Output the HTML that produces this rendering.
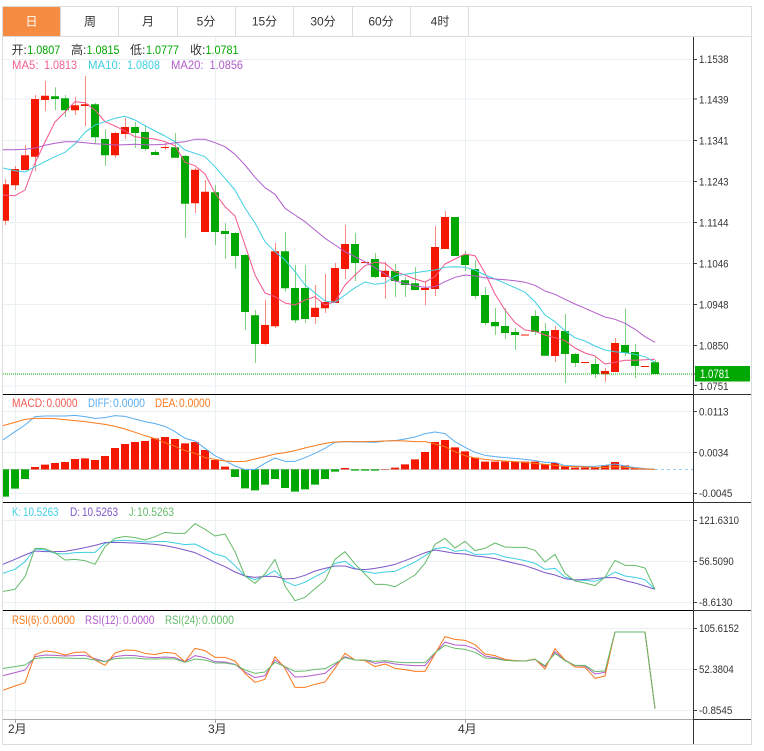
<!DOCTYPE html>
<html lang="zh">
<head>
<meta charset="utf-8">
<title>K线图</title>
<style>
html,body{margin:0;padding:0;background:#fff;width:764px;height:751px;overflow:hidden}
svg{display:block;font-family:"Liberation Sans","Noto Sans CJK SC",sans-serif}
.l{fill:none;stroke-width:1;vector-effect:non-scaling-stroke;stroke-linejoin:round}
.ax{font-size:11px;fill:#333}
.t{font-size:12px;fill:#333;text-anchor:middle;font-family:"Liberation Sans","Noto Sans CJK SC",sans-serif}
.lg{font-size:12px}
</style>
</head>
<body>
<svg width="764" height="751" viewBox="0 0 764 751" xmlns="http://www.w3.org/2000/svg">
<rect width="764" height="751" fill="#fff"/>
<rect x="2.5" y="6.5" width="749" height="738" fill="#fff" stroke="#dcdcdc"/>
<rect x="3" y="7" width="57" height="29" fill="#f58c42"/>
<path d="M3 36.5H751M60.5 7V36M118.5 7V36M177.5 7V36M235.5 7V36M293.5 7V36M352.5 7V36M410.5 7V36M468.5 7V36" stroke="#dcdcdc" fill="none"/>
<text class="t" x="31.5" y="25.5" style="fill:#fff">日</text>
<text class="t" x="90" y="25.5">周</text>
<text class="t" x="148" y="25.5">月</text>
<text class="t" x="206" y="25.5">5分</text>
<text class="t" x="264.5" y="25.5">15分</text>
<text class="t" x="323" y="25.5">30分</text>
<text class="t" x="381" y="25.5">60分</text>
<text class="t" x="440" y="25.5">4时</text>

<!-- grid -->
<path stroke="#e9f0f4" fill="none" d="M3 59.5H693M3 99H693M3 140.5H693M3 181.5H693M3 222.5H693M3 263.5H693M3 304.5H693M3 345.5H693M3 386H693M3 411.5H693M3 452.5H693M3 493.5H693M3 520.5H693M3 561.5H693M3 602.5H693M3 628.5H693M3 669.5H693M3 710.5H693"/>
<path stroke="#eaf1f5" fill="none" d="M15.5 37V719M215.5 37V719M465.5 37V719"/>

<clipPath id="c"><rect x="3" y="37" width="690" height="682"/></clipPath>
<g clip-path="url(#c)">
<!-- candle wicks -->
<g transform="translate(.5,0)" stroke-opacity=".5">
<path fill="none" stroke="#f51800" d="M5 179V225M15 166V190M25 145V170M35 95V171M45 81V111M75 96.700V115M85 76V126M115 131.700V158M125 118V139M165 143V150M195 168V213M205 180V232M265 300V345M275 243V328M315 285V324M325 274V313M335 263V303M345 225V279M385 262V298.700M425 281.700V305.300M435 226V296M445 211V249M555 326V362M605 368V381.700M615 338V372"/>
<path fill="none" stroke="#02a802" d="M55 87.300V110M65 95V117M95 103V144M105 129.300V165.700M135 122V148M145 125V151M155 150V155M175 133V157.700M185 155V238M215 185V245M225 223V258.700M235 232.300V268.700M245 254V330M255 310V363M285 232V291.700M295 265V323M305 265V323M355 233V281M375 253V278M395 264V297M405 277V297M415 267V290M465 251V271M475 260V299M485 287V325M495 308V335M505 308V339M515 328V350M535 310V335M545 323V356M565 314V383M575 353V367M595 357V378M625 308.700V356M635 344V378M655 360V374"/>
</g>
<!-- candle bodies -->
<path fill="#f51800" d="M1 184.300h8V220.700h-8zM11 169h8V185.300h-8zM21 155.300h8V170h-8zM31 99h8V156.700h-8zM41 95.700h8V100h-8zM71 105.300h8V110.300h-8zM81 104.300h8V106h-8zM111 133h8V155.300h-8zM121 127h8V134h-8zM161 147h8V148h-8zM191 169.700h8V203.300h-8zM201 191.700h8V232h-8zM261 325h8V344h-8zM271 251.300h8V326.300h-8zM311 307.700h8V317h-8zM321 302h8V308.300h-8zM331 268h8V303h-8zM341 244h8V269h-8zM361 262h8V263h-8zM381 270.700h8V277h-8zM421 288h8V290h-8zM431 247h8V289h-8zM441 217h8V249h-8zM521 334.500h8V335.500h-8zM551 330h8V356h-8zM581 362h8V363h-8zM601 371h8V374.300h-8zM611 343h8V372h-8zM641 366h8V367h-8z"/>
<path fill="#02a802" d="M51 96.300h8V99h-8zM61 98.300h8V110.300h-8zM91 104.300h8V137.300h-8zM101 139h8V155.300h-8zM131 127h8V133h-8zM141 132h8V149h-8zM151 152h8V155h-8zM171 147.300h8V157.700h-8zM181 156h8V203.700h-8zM211 192.300h8V232h-8zM221 231h8V234h-8zM231 233h8V256h-8zM241 255h8V312h-8zM251 315.300h8V344h-8zM281 251.300h8V288.300h-8zM291 288h8V320.300h-8zM301 288h8V319h-8zM351 244h8V263h-8zM371 259h8V277h-8zM391 271h8V281h-8zM401 280.300h8V285h-8zM411 283.300h8V290h-8zM451 217h8V256h-8zM461 255h8V265h-8zM471 269h8V296h-8zM481 295h8V323h-8zM491 322h8V326.300h-8zM501 326h8V333h-8zM511 332h8V335h-8zM531 316h8V332h-8zM541 331h8V355.700h-8zM561 331h8V354h-8zM571 354h8V363h-8zM591 364h8V374h-8zM621 345h8V353h-8zM631 352h8V366h-8zM651 362.300h8V374h-8z"/>
<!-- MA -->
<polyline class="l" stroke="#f4558e" points="3,195 15,195.700 25,190 35,163 45,142 55,122 65,112 75,101.700 85,102.700 95,110 105,121.700 115,126 125,131 135,136.700 145,138 155,139 165,141.700 175,145.700 185,162.300 195,165.700 205,174 215,193 225,206.700 235,216 245,245 255,275 265,293 275,296.700 285,303 295,305 305,300 315,296.700 325,305 335,301.700 345,285 355,275 365,265.700 375,262.300 385,263.300 395,271.700 405,275 415,279 425,282 435,276.700 445,264 455,259 465,254 475,255.700 485,273 495,294 505,310 515,322.700 525,330 535,331.300 545,335 555,337.700 565,340.700 575,348 585,353 595,356 605,364 615,362.300 625,360.300 635,360.300 645,359.700 655,359.300"/>
<polyline class="l" stroke="#3fcfe2" points="3,168 15,170.700 25,172 35,166.700 45,161.700 55,156.700 65,152.300 75,144 85,132.300 95,125 105,121.700 115,118.300 125,116.300 135,120 145,125.700 155,131 165,136 175,141.700 185,150 195,153.300 205,156.700 215,166.700 225,178.300 235,190 245,208 255,223 265,241.700 275,251.700 285,260 295,271.700 305,285 315,293 325,301 335,302.300 345,295 355,287.700 365,282 375,284.300 385,283 395,276 405,274.300 415,272.700 425,271.300 435,270 445,267.300 455,266.700 465,267.300 475,270 485,275 495,279 505,283.300 515,287.700 525,292.300 535,301.700 545,315 555,321.700 565,330.700 575,337.700 585,341 595,346 605,350 615,351.700 625,352.700 635,354.300 645,356.700 655,362.300"/>
<polyline class="l" stroke="#b25dcc" points="3,149.700 15,149.700 25,149.300 35,148 45,145.300 55,143.300 65,141.700 75,141.700 85,142.700 95,143.700 105,144.300 115,145 125,144.700 135,144.300 145,144.700 155,144.700 165,144.300 175,142.700 185,141.700 195,139.300 205,139.300 215,142.700 225,146.700 235,154.300 245,165 255,177.300 265,187.700 275,194.300 285,208.300 295,215 305,221.700 315,230 325,238.300 335,245 345,251.700 355,256.700 365,261.700 375,267.700 385,274 395,281 405,283.300 415,286 425,287.300 435,286.700 445,281.700 455,277.300 465,275 475,276 485,277.700 495,279 505,279.700 515,280.700 525,282.300 535,285.300 545,291 555,294.300 565,299.300 575,304 585,308.300 595,312.700 605,317 615,319.300 625,323.300 635,329.300 645,336.700 655,342.300"/>
<path d="M3 374H693" stroke="#02a802" stroke-dasharray="1 1" stroke-width="1" fill="none"/>

<!-- MACD -->
<g transform="translate(0,390) scale(1,.33333)">
<path d="M655 238.500H693" class="l" stroke="#6cb8ee" stroke-dasharray="3 3" opacity=".7"/>
<path d="M3 238.500H655" class="l" stroke="#c9c9c9"/>
<path fill="#f51800" d="M31 238V231h8V238zM41 238V224h8V238zM51 238V219h8V238zM61 238V216h8V238zM71 238V207h8V238zM81 238V205h8V238zM91 238V210h8V238zM101 238V198h8V238zM111 238V174h8V238zM121 238V162h8V238zM131 238V156h8V238zM141 238V153h8V238zM151 238V145h8V238zM161 238V141h8V238zM171 238V147h8V238zM181 238V160h8V238zM191 238V156h8V238zM201 238V180h8V238zM211 238V210h8V238zM221 238V230h8V238zM341 238V234h8V238zM381 238V237h8V238zM391 238V233h8V238zM401 238V223h8V238zM411 238V208h8V238zM421 238V186h8V238zM431 238V156h8V238zM441 238V150h8V238zM451 238V172h8V238zM461 238V184h8V238zM471 238V203h8V238zM481 238V215h8V238zM491 238V215h8V238zM501 238V215h8V238zM511 238V215h8V238zM521 238V215h8V238zM531 238V215h8V238zM541 238V223h8V238zM551 238V219h8V238zM561 238V230h8V238zM571 238V233h8V238zM581 238V233h8V238zM591 238V233h8V238zM601 238V226h8V238zM611 238V216h8V238zM621 238V226h8V238zM631 238V232h8V238zM641 238V236h8V238z"/>
<path fill="#02a802" d="M1 238V320h8V238zM11 238V296h8V238zM21 238V267h8V238zM231 238V261h8V238zM241 238V295h8V238zM251 238V301h8V238zM261 238V284h8V238zM271 238V267h8V238zM281 238V294h8V238zM291 238V305h8V238zM301 238V298h8V238zM311 238V284h8V238zM321 238V267h8V238zM331 238V245h8V238zM351 238V242h8V238zM361 238V242h8V238zM371 238V242h8V238z"/>
<polyline class="l" stroke="#5aaef0" points="3,150 15,125 25,105 35,80 45,78 55,78 65,78 75,76 85,80 95,85 105,83 115,77 125,79 135,87 145,95 155,101 165,109 175,125 185,145 195,153 205,175 215,197 225,212 235,228 245,239 255,238 265,220 275,204 285,214 295,214 305,203 315,190 325,175 335,157 345,155 355,156 365,156 375,157 385,153 395,152 405,147 415,141 425,131 435,126 445,131 455,155 465,172 475,187 485,196 495,200 505,203 515,205 525,208 535,212 545,217 555,217 565,227 575,228 585,229 595,229 605,226 615,222 625,228 635,233 645,236 655,238"/>
<polyline class="l" stroke="#f9791c" points="3,107 15,97 25,88 35,85 45,85 55,86 65,89 75,92 85,95 95,99 105,103 115,109 125,117 135,127 145,137 155,146 165,158 175,169 185,182 195,190 205,203 215,208 225,213 235,215 245,214 255,207 265,200 275,192 285,188 295,182 305,174 315,167 325,160 335,156 345,155 355,155 365,155 375,154 385,153 395,152 405,153 415,155 425,155 435,162 445,170 455,185 465,197 475,204 485,208 495,211 505,213 515,215 525,217 535,220 545,223 555,226 565,229 575,230 585,231 595,232 605,232 615,230 625,232 635,235 645,237 655,238"/>
</g>

<!-- KDJ -->
<g transform="translate(0,500) scale(1,.33333)">
<polyline class="l" stroke="#3fcfe2" points="3,220 15,208 25,185 35,147 45,150 55,160 65,162 75,158 85,157 95,157 105,130 115,122 125,121 135,123 145,126 155,125 165,124 175,129 185,134 195,132 205,147 215,162 225,170 235,197 245,228 255,239 265,228 275,212 285,244 295,257 305,247 315,230 325,215 335,190 345,184 355,205 365,215 375,220 385,216 395,214 405,200 415,186 425,167 435,146 445,142 455,154 465,150 475,163 485,163 495,161 505,171 515,176 525,182 535,190 545,208 555,205 565,231 575,240 585,241 595,244 605,233 615,216 625,228 635,232 645,239 655,268"/>
<polyline class="l" stroke="#7e57c8" points="3,193 15,178 25,165 35,153 45,155 55,155 65,154 75,149 85,143 95,136 105,128 115,127 125,128 135,129 145,131 155,133 165,137 175,143 185,150 195,158 205,172 215,187 225,200 235,216 245,228 255,232 265,229 275,229 285,237 295,235 305,226 315,213 325,205 335,198 345,198 355,207 365,209 375,205 385,200 395,193 405,182 415,170 425,158 435,150 445,155 455,160 465,162 475,168 485,171 495,176 505,183 515,190 525,197 535,207 545,218 555,225 565,236 575,240 585,238 595,236 605,233 615,233 625,242 635,249 645,258 655,268"/>
<polyline class="l" stroke="#66bb6a" points="3,274 15,268 25,230 35,145 45,146 55,158 65,180 75,178 85,182 95,193 105,140 115,115 125,109 135,113 145,120 155,110 165,97 175,100 185,100 195,71 205,88 215,108 225,102 235,155 245,228 255,250 265,222 275,178 285,258 295,302 305,292 315,266 325,241 335,178 345,155 355,192 365,222 375,253 385,253 395,260 405,243 415,225 425,190 435,133 445,115 455,144 465,124 475,152 485,145 495,129 505,141 515,142 525,142 535,151 545,186 555,163 565,220 575,243 585,249 595,257 605,231 615,181 625,196 635,196 645,204 655,268"/>
</g>

<!-- RSI -->
<g transform="translate(0,610) scale(1,.33333)">
<polyline class="l" stroke="#b25dcc" points="3,197 15,188 25,180 35,140 45,135 55,136 65,138 75,137 85,136 95,146 105,155 115,140 125,136 135,137 145,141 155,143 165,141 175,143 185,155 195,137 205,143 215,155 225,156 235,163 245,186 255,203 265,197 275,150 285,170 295,201 305,200 315,195 325,190 335,165 345,140 355,150 365,150 375,160 385,156 395,162 405,165 415,167 425,167 435,130 445,96 455,105 465,106 475,116 485,138 495,143 505,150 515,152 525,153 535,148 545,170 555,125 565,150 575,167 585,168 595,192 605,187 615,66 625,66 635,66 645,66 655,296"/>
<polyline class="l" stroke="#f9791c" points="3,241 15,228 25,218 35,134 45,123 55,126 65,135 75,127 85,126 95,150 105,166 115,129 125,120 135,121 145,130 155,134 165,127 175,130 185,155 195,115 205,122 215,142 225,142 235,153 245,190 255,217 265,208 275,140 285,175 295,232 305,232 315,223 325,216 335,175 345,130 355,150 365,152 375,170 385,162 395,175 405,179 415,184 425,184 435,132 445,80 455,88 465,91 475,104 485,132 495,137 505,148 515,152 525,153 535,147 545,177 555,116 565,150 575,171 585,172 595,205 605,198 615,66 625,66 635,66 645,66 655,296"/>
<polyline class="l" stroke="#66bb6a" points="3,175 15,170 25,165 35,145 45,143 55,143 65,144 75,145 85,145 95,150 105,155 115,146 125,144 135,144 145,147 155,147 165,146 175,147 185,157 195,147 205,150 215,159 225,159 235,164 245,180 255,190 265,186 275,157 285,170 295,184 305,183 315,178 325,176 335,160 345,143 355,150 365,150 375,154 385,152 395,156 405,158 415,158 425,158 435,128 445,106 455,115 465,118 475,127 485,144 495,146 505,151 515,153 525,153 535,148 545,167 555,130 565,152 575,166 585,166 595,185 605,183 615,66 625,66 635,66 645,66 655,296"/>
</g>
</g>

<!-- separators -->
<path stroke="#000" fill="none" d="M3 394.500H693M3 502.500H693M3 610.500H693"/>
<path stroke="#333" fill="none" d="M693 394.500H751M693 502.500H751M693 610.500H751M693 719.500H751"/>
<path stroke="#aaa" fill="none" d="M3 719.500H693M15.500 720V723M215.500 720V723M465.500 720V723"/>
<path stroke="#333" fill="none" d="M693.500 37V744"/>
<path stroke="#444" fill="none" d="M694 59.500h3M694 99h3M694 140.500h3M694 181.500h3M694 222.500h3M694 263.500h3M694 304.500h3M694 345.500h3M694 374h3M694 385.500h3M694 411.500h3M694 452.500h3M694 493.500h3M694 520.500h3M694 561.500h3M694 602.500h3M694 628.500h3M694 669.500h3M694 710.500h3"/>

<!-- axis labels -->
<g class="ax">
<text x="699" y="63" textLength="29.500" lengthAdjust="spacingAndGlyphs">1.1538</text>
<text x="699" y="103.500" textLength="29.500" lengthAdjust="spacingAndGlyphs">1.1439</text>
<text x="699" y="144.500" textLength="29.500" lengthAdjust="spacingAndGlyphs">1.1341</text>
<text x="699" y="185.500" textLength="29.500" lengthAdjust="spacingAndGlyphs">1.1243</text>
<text x="699" y="226.500" textLength="29.500" lengthAdjust="spacingAndGlyphs">1.1144</text>
<text x="699" y="267.500" textLength="29.500" lengthAdjust="spacingAndGlyphs">1.1046</text>
<text x="699" y="308.500" textLength="29.500" lengthAdjust="spacingAndGlyphs">1.0948</text>
<text x="699" y="349.500" textLength="29.500" lengthAdjust="spacingAndGlyphs">1.0850</text>
<text x="699" y="390" textLength="29.500" lengthAdjust="spacingAndGlyphs">1.0751</text>
<text x="699" y="415.500" textLength="29.500" lengthAdjust="spacingAndGlyphs">0.0113</text>
<text x="699" y="456.500" textLength="29.500" lengthAdjust="spacingAndGlyphs">0.0034</text>
<text x="699" y="497" textLength="33.300" lengthAdjust="spacingAndGlyphs">-0.0045</text>
<text x="699" y="524" textLength="40" lengthAdjust="spacingAndGlyphs">121.6310</text>
<text x="699" y="565" textLength="34.700" lengthAdjust="spacingAndGlyphs">56.5090</text>
<text x="699" y="606" textLength="33.300" lengthAdjust="spacingAndGlyphs">-8.6130</text>
<text x="699" y="632" textLength="40" lengthAdjust="spacingAndGlyphs">105.6152</text>
<text x="699" y="673" textLength="34.700" lengthAdjust="spacingAndGlyphs">52.3804</text>
<text x="699" y="714" textLength="33.300" lengthAdjust="spacingAndGlyphs">-0.8545</text>
</g>
<rect x="695" y="366" width="55" height="15.500" fill="#02a802"/>
<text x="700" y="378" font-size="11.500" fill="#fff" textLength="29.500" lengthAdjust="spacingAndGlyphs">1.0781</text>

<!-- x labels -->
<g class="lg" fill="#333">
<text x="8" y="733">2月</text>
<text x="208" y="733">3月</text>
<text x="458" y="733">4月</text>
</g>

<!-- legends -->
<g class="lg">
<g fill="#333">
<text x="11.500" y="54">开:</text>
<text x="71" y="54">高:</text>
<text x="130" y="54">低:</text>
<text x="190" y="54">收:</text>
</g>
<g fill="#02a802">
<text x="27.300" y="54" textLength="33" lengthAdjust="spacingAndGlyphs">1.0807</text>
<text x="86.500" y="54" textLength="33" lengthAdjust="spacingAndGlyphs">1.0815</text>
<text x="146" y="54" textLength="33" lengthAdjust="spacingAndGlyphs">1.0777</text>
<text x="205.500" y="54" textLength="33" lengthAdjust="spacingAndGlyphs">1.0781</text>
</g>
<text x="12" y="69" fill="#f4608f" textLength="26.500" lengthAdjust="spacingAndGlyphs">MA5:</text>
<text x="44" y="69" fill="#f4608f" textLength="33" lengthAdjust="spacingAndGlyphs">1.0813</text>
<text x="88" y="69" fill="#3fcfe2" textLength="33" lengthAdjust="spacingAndGlyphs">MA10:</text>
<text x="127" y="69" fill="#3fcfe2" textLength="33" lengthAdjust="spacingAndGlyphs">1.0808</text>
<text x="171" y="69" fill="#b25dcc" textLength="32.500" lengthAdjust="spacingAndGlyphs">MA20:</text>
<text x="209.500" y="69" fill="#b25dcc" textLength="33.500" lengthAdjust="spacingAndGlyphs">1.0856</text>

<text x="12" y="407" fill="#f25a50" textLength="33" lengthAdjust="spacingAndGlyphs">MACD:</text>
<text x="46.500" y="407" fill="#f25a50" textLength="31" lengthAdjust="spacingAndGlyphs">0.0000</text>
<text x="88" y="407" fill="#5aaef0" textLength="24" lengthAdjust="spacingAndGlyphs">DIFF:</text>
<text x="113" y="407" fill="#5aaef0" textLength="32" lengthAdjust="spacingAndGlyphs">0.0000</text>
<text x="155" y="407" fill="#f9791c" textLength="23" lengthAdjust="spacingAndGlyphs">DEA:</text>
<text x="179" y="407" fill="#f9791c" textLength="31.500" lengthAdjust="spacingAndGlyphs">0.0000</text>

<text x="12" y="516" fill="#3fcfe2" textLength="9" lengthAdjust="spacingAndGlyphs">K:</text>
<text x="23" y="516" fill="#3fcfe2" textLength="35.500" lengthAdjust="spacingAndGlyphs">10.5263</text>
<text x="70" y="516" fill="#7e57c8" textLength="10" lengthAdjust="spacingAndGlyphs">D:</text>
<text x="82" y="516" fill="#7e57c8" textLength="36" lengthAdjust="spacingAndGlyphs">10.5263</text>
<text x="129" y="516" fill="#66bb6a" textLength="7" lengthAdjust="spacingAndGlyphs">J:</text>
<text x="137" y="516" fill="#66bb6a" textLength="37" lengthAdjust="spacingAndGlyphs">10.5263</text>

<text x="12" y="624" fill="#f9791c" textLength="30" lengthAdjust="spacingAndGlyphs">RSI(6):</text>
<text x="43" y="624" fill="#f9791c" textLength="32" lengthAdjust="spacingAndGlyphs">0.0000</text>
<text x="85" y="624" fill="#b25dcc" textLength="36.500" lengthAdjust="spacingAndGlyphs">RSI(12):</text>
<text x="123" y="624" fill="#b25dcc" textLength="31.500" lengthAdjust="spacingAndGlyphs">0.0000</text>
<text x="165" y="624" fill="#66bb6a" textLength="36" lengthAdjust="spacingAndGlyphs">RSI(24):</text>
<text x="202" y="624" fill="#66bb6a" textLength="32" lengthAdjust="spacingAndGlyphs">0.0000</text>
</g>
</svg>
</body>
</html>
